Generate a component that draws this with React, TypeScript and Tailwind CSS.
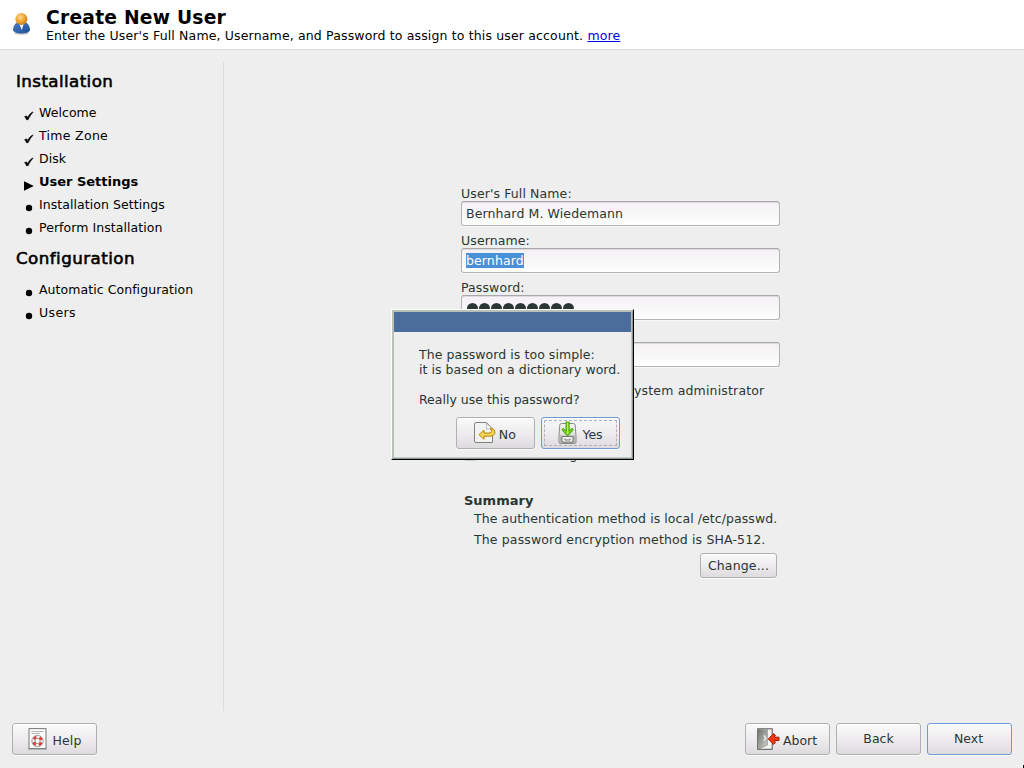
import type { ReactNode } from 'react';

const BUTTON =
  'flex items-center justify-center rounded-[3px] border bg-linear-to-b from-[#fbfafb] via-[#eeecee] to-[#dddbdd] shadow-[0_1px_0_#fafafa,inset_0_1px_0_#ffffff]';

function CheckMark() {
  return (
    <svg width="10" height="10" viewBox="0 0 10 10">
      <path d="M.6 5.6 2.6 4.9 3.6 6.4C5 4 6.6 1.9 8.6.9L8.9 1.5C7 3.2 5.5 5.8 4.1 8.7L2.5 8.7C2 7.4 1.5 6.6.6 5.6Z" fill="#000" stroke="#000" strokeWidth=".6" strokeLinejoin="round" />
    </svg>
  );
}

function Arrow() {
  return (
    <svg width="10" height="10" viewBox="0 0 10 10" className="translate-y-px">
      <path d="M0 .2 9.8 5 0 9.8Z" fill="#000" />
    </svg>
  );
}

function Dot() {
  return (
    <svg width="10" height="10" viewBox="0 0 10 10">
      <circle cx="5" cy="5" r="3.2" fill="#000" />
    </svg>
  );
}

function Step({ icon, bold, children }: { icon: ReactNode; bold?: boolean; children: ReactNode }) {
  return (
    <li className="flex h-[23px] items-center">
      <span className="mr-[5px] block pt-[7px]">{icon}</span>
      <span className={bold ? 'text-[13px] font-bold tracking-[-0.02px]' : 'tracking-[0.06px]'}>{children}</span>
    </li>
  );
}

function UserIcon() {
  return (
    <svg width="19" height="24" viewBox="0 0 19 24">
      <defs>
        <radialGradient id="head" cx=".4" cy=".35" r=".65">
          <stop offset="0" stopColor="#ffd795" />
          <stop offset=".6" stopColor="#f3a42c" />
          <stop offset="1" stopColor="#c08020" />
        </radialGradient>
        <linearGradient id="body" x1="0" y1="0" x2="1" y2="1">
          <stop offset="0" stopColor="#4a7fc8" />
          <stop offset="1" stopColor="#1c4c96" />
        </linearGradient>
      </defs>
      <ellipse cx="9.5" cy="21.2" rx="7.5" ry="1.6" fill="#000" opacity=".25" />
      <path d="M1 18.5C1 14.5 3 11 6 10H13C16 11 18 14.5 18 18.5 16.8 20.5 13.5 21.4 9.5 21.4S2.2 20.5 1 18.5Z" fill="url(#body)" />
      <path d="M7.2 11.5H11.8L9.8 18Z" fill="#f1f5fb" />
      <circle cx="9.4" cy="7" r="6" fill="url(#head)" />
    </svg>
  );
}

function NoIcon() {
  return (
    <svg width="22" height="22" viewBox="0 0 22 22">
      <path d="M2 .5H12.5L18.5 7V20.5H2Q.5 20.5 .5 19V2Q.5.5 2 .5Z" fill="#f3f3f2" stroke="#80827e" />
      <path d="M12.2.8Q13.4 4 12.2 7Q15.5 6 18.3 7.2Z" fill="#fff" stroke="#a9aaa7" strokeWidth=".8" />
      <path d="M5 12.7 10 8V11H15Q17.7 11 17.7 9.2T16 7.3L17 6.5Q21 7 21 10.2T16.5 14.2H10V17.3Z" fill="#f2d35c" stroke="#b98a00" strokeLinejoin="round" />
    </svg>
  );
}

function YesIcon() {
  return (
    <svg width="19" height="24" viewBox="0 0 19 24">
      <defs>
        <linearGradient id="drive" x1="0" y1="0" x2="0" y2="1">
          <stop offset="0" stopColor="#fafafa" />
          <stop offset="1" stopColor="#c9cac7" />
        </linearGradient>
      </defs>
      <path d="M3.5 2.5H15.5Q17 2.5 17.2 4L18 15V21Q18 22.5 16.5 22.5H2.5Q1 22.5 1 21V15L1.8 4Q2 2.5 3.5 2.5Z" fill="url(#drive)" stroke="#8a8c88" />
      <path d="M1.5 14.5H17.5V21Q17.5 22 16.5 22H2.5Q1.5 22 1.5 21Z" fill="#b2b4b0" />
      <rect x="4" y="15.5" width="11" height="5.6" rx="1" fill="#f1f1f0" stroke="#6a6c68" strokeWidth=".9" />
      <path d="M7 17.5V19H12V17.5" fill="none" stroke="#777975" />
      <path d="M8 1H11.2V10L14 7.2 15.4 8.7 9.6 15 3.8 8.7 5.2 7.2 8 10Z" fill="#73d216" stroke="#3f960c" strokeWidth=".9" strokeLinejoin="round" />
      <path d="M9.6 1.8V13" stroke="#b9f06a" strokeWidth="1.2" />
    </svg>
  );
}

function HelpIcon() {
  return (
    <svg width="19" height="22" viewBox="0 0 19 22">
      <path d="M0 21.3H19" stroke="#b0b0ae" />
      <rect x="1" y=".6" width="17" height="20" fill="#fafafa" stroke="#777975" />
      <path d="M3.5 3.5H15.5M3.5 5.5H12" stroke="#b5b5b3" />
      <circle cx="9.5" cy="13" r="4.2" fill="none" stroke="#efefef" strokeWidth="2.6" />
      <circle cx="9.5" cy="13" r="4.2" fill="none" stroke="#e03b3b" strokeWidth="2.6" strokeDasharray="3.3 3.297" strokeDashoffset="-1.65" />
      <circle cx="9.5" cy="13" r="5.7" fill="none" stroke="#8b8b89" strokeWidth=".8" />
      <circle cx="9.5" cy="13" r="2.6" fill="#fff" stroke="#7f6666" strokeWidth=".8" />
    </svg>
  );
}

function AbortIcon() {
  return (
    <svg width="23" height="22" viewBox="0 0 23 22">
      <defs>
        <linearGradient id="door" x1="0" y1="0" x2="1" y2="1">
          <stop offset="0" stopColor="#70726e" />
          <stop offset=".6" stopColor="#aaaca8" />
          <stop offset="1" stopColor="#deded8" />
        </linearGradient>
      </defs>
      <rect x=".7" y=".8" width="14.5" height="20.5" fill="#f4f4f2" stroke="#555753" />
      <path d="M1 1.3H10.3V17L1 21Z" fill="url(#door)" />
      <path d="M10.3 1.3V17L1.5 21" fill="none" stroke="#888a85" strokeWidth=".8" />
      <path d="M6.8 7.5 8.9 10 6.8 12.5" fill="none" stroke="#eee" strokeWidth="1.2" />
      <path d="M11.3 11 16.5 5.6 18.5 7.3 17.2 9.2H22V12.6H17.2L18.5 14.6 16.5 16.4Z" fill="#f03a14" stroke="#a81800" strokeLinejoin="round" />
    </svg>
  );
}

function Field({ label, children }: { label?: string; children?: ReactNode }) {
  return (
    <div className="mb-[7px] tracking-[0.11px]">
      <div className="h-[15px]">{label}</div>
      <div className="flex h-[25px] w-[319px] items-center rounded-[3px] border border-[#b4b4b6] border-t-[#a9a7aa] bg-linear-to-b from-[#f5f0f4] via-[#f8f7f8] to-[#ffffff] px-1 shadow-[0_1px_0_#f8f8f8,inset_0_1px_0_#dddade]">
        {children}
      </div>
    </div>
  );
}

function Option({ children }: { children?: ReactNode }) {
  return (
    <div className="flex h-8 items-center pl-[3px] tracking-[0.17px]">
      <span className="mr-2 size-[13px] rounded-[2px] border border-[#ccc] bg-white" />
      {children}
    </div>
  );
}

export default function App() {
  return (
    <div className="relative flex h-[768px] w-[1024px] flex-col overflow-hidden bg-[#eeeeee] font-['DejaVu_Sans',sans-serif] text-[12.5px] leading-[15px] whitespace-nowrap text-[#2b3633]">
      <header className="flex h-[50px] shrink-0 border-b border-[#d9d9d9] bg-white pl-3 text-black">
        <div className="w-[34px] pt-3">
          <UserIcon />
        </div>
        <div className="pt-[7px]">
          <h1 className="text-[18.7px] leading-[21px] font-bold tracking-[0.23px]">Create New User</h1>
          <p className="tracking-[0.15px]">
            Enter the User's Full Name, Username, and Password to assign to this user account.{' '}
            <a className="text-[#0000ee] underline">more</a>
          </p>
        </div>
      </header>

      <div className="flex h-[661px] shrink-0 pt-3">
        <aside className="w-[224px] border-r border-[#dcdcdc] pt-[9px] pl-4 text-black">
          <h2 className="h-[30px] text-[16.7px] leading-5 font-medium tracking-[0.4px] [-webkit-text-stroke:0.6px_#000]">Installation</h2>
          <ul className="pl-2">
            <Step icon={<CheckMark />}>Welcome</Step>
            <Step icon={<CheckMark />}><span className="tracking-[0.3px]">Time Zone</span></Step>
            <Step icon={<CheckMark />}>Disk</Step>
            <Step icon={<Arrow />} bold>User Settings</Step>
            <Step icon={<Dot />}>Installation Settings</Step>
            <Step icon={<Dot />}>Perform Installation</Step>
          </ul>
          <h2 className="mt-[9px] h-[30px] text-[16.7px] leading-5 font-medium tracking-[0.45px] [-webkit-text-stroke:0.6px_#000]">Configuration</h2>
          <ul className="pl-2">
            <Step icon={<Dot />}>Automatic Configuration</Step>
            <Step icon={<Dot />}><span className="tracking-[0.4px]">Users</span></Step>
          </ul>
        </aside>

        <main className="pt-[124px] pl-[237px]">
          <Field label="User's Full Name:">Bernhard M. Wiedemann</Field>
          <Field label="Username:">
            <span className="bg-[#4a90d9] text-white">bernhard</span>
          </Field>
          <Field label="Password:">
            <span className="flex gap-[1px] pt-[2px] pl-px">
              {Array.from({ length: 9 }, (_, i) => (
                <span key={i} className="size-[11px] rounded-full bg-[#2b3633]" />
              ))}
            </span>
          </Field>
          <Field />
          <Option>Use this password for system administrator</Option>
          <Option />
          <Option>Automatic Login</Option>
          <section className="w-[320px] pt-[23px] pl-[3px]">
            <h3 className="text-[13px] font-bold">Summary</h3>
            <p className="pt-[3px] pl-[10px] tracking-[0.07px]">The authentication method is local /etc/passwd.</p>
            <p className="pt-[6px] pl-[10px] tracking-[0.14px]">The password encryption method is SHA-512.</p>
            <button className={`${BUTTON} mt-[6px] mr-1 ml-auto h-[25px] w-[77px] border-[#b0b0b2] tracking-[0.15px]`}>Change...</button>
          </section>
        </main>
      </div>

      <footer className="flex h-[57px] shrink-0 items-start px-3 pt-3">
        <button className={`${BUTTON} h-8 w-[85px] gap-[5px] border-[#b0b0b2] pl-px tracking-[0.15px]`}>
          <HelpIcon />
          <span className="pt-[2px]">Help</span>
        </button>
        <div className="ml-auto flex gap-[6px]">
          <button className={`${BUTTON} h-8 w-[85px] gap-[3px] border-[#b0b0b2] pr-px`}>
            <AbortIcon />
            <span className="pt-[2px]">Abort</span>
          </button>
          <button className={`${BUTTON} h-8 w-[85px] border-[#b0b0b2] pb-[2px]`}>Back</button>
          <button className={`${BUTTON} h-8 w-[85px] border-[#6f9bd1] pr-[2px] pb-[2px]`}>Next</button>
        </div>
      </footer>

      <div className="absolute top-[309px] left-[391px] h-[151px] w-[243px] border border-t-white border-r-black border-b-black border-l-white bg-[#eeeeee]">
        <div className="flex h-full flex-col border-t-2 border-r border-b border-l-2 border-[#b8c0b8] border-r-[#8f9690] border-b-[#8f9690]">
          <div className="h-5 shrink-0 border-r border-[#b8c0b8] bg-[#4b6d9b]" />
          <div className="flex flex-1 flex-col border-r border-b border-[#c4cac4] pt-[15px] pl-[25px]">
            <p className="tracking-[0.06px]">The password is too simple:</p>
            <p className="tracking-[0.03px]">it is based on a dictionary word.</p>
            <p className="pt-[15px]">Really use this password?</p>
            <div className="ml-[37px] flex gap-[6px] pt-[10px]">
              <button className={`${BUTTON} h-8 w-[79px] gap-[3px] border-[#b0b0b2] pr-px tracking-[0.2px]`}>
                <NoIcon />
                <span className="pt-[2px]">No</span>
              </button>
              <button className={`${BUTTON} h-8 w-[79px] border-[#6f9bd1] p-[2px]`}>
                <span className="flex h-full w-full items-center justify-center gap-[5px] border border-dashed border-[#b3b1b5]">
                  <YesIcon />
                  <span className="pt-[2px]">Yes</span>
                </span>
              </button>
            </div>
          </div>
        </div>
      </div>
      <div className="absolute right-0 bottom-0 h-[3px] w-px bg-black" />
    </div>
  );
}
